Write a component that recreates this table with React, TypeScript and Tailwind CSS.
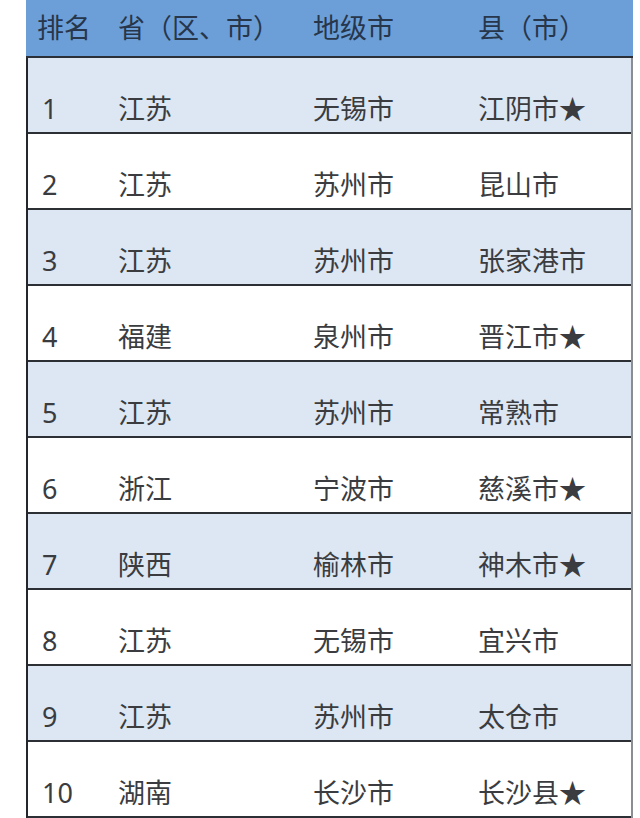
import React from "react";

type Row = {
  rank: string;
  province: string;
  city: string;
  county: string;
  star?: boolean;
};

const rows: Row[] = [
  { rank: "1", province: "江苏", city: "无锡市", county: "江阴市", star: true },
  { rank: "2", province: "江苏", city: "苏州市", county: "昆山市" },
  { rank: "3", province: "江苏", city: "苏州市", county: "张家港市" },
  { rank: "4", province: "福建", city: "泉州市", county: "晋江市", star: true },
  { rank: "5", province: "江苏", city: "苏州市", county: "常熟市" },
  { rank: "6", province: "浙江", city: "宁波市", county: "慈溪市", star: true },
  { rank: "7", province: "陕西", city: "榆林市", county: "神木市", star: true },
  { rank: "8", province: "江苏", city: "无锡市", county: "宜兴市" },
  { rank: "9", province: "江苏", city: "苏州市", county: "太仓市" },
  { rank: "10", province: "湖南", city: "长沙市", county: "长沙县", star: true },
];

const font = {
  fontFamily: '"Noto Sans", "Noto Sans CJK SC", sans-serif',
};

export default function App() {
  return (
    <div className="bg-white w-[640px] h-[818px] overflow-hidden" style={font}>
      <div className="ml-[26px] w-[607px]">
        {/* header */}
        <div className="h-[58px] bg-[#6c9fd7] border-b-2 border-[#2a2f38] grid grid-cols-[92px_195px_165px_1fr] items-center text-[27px] leading-[27px] text-[#27364a] pb-[2px]">
          <div className="pl-[11px]">排名</div>
          <div>省（区、市）</div>
          <div>地级市</div>
          <div>县（市）</div>
        </div>

        {/* body */}
        <div className="border-l-2 border-l-[#23262b] border-r-2 border-r-[#8a8d91]">
          {rows.map((r, i) => (
            <div
              key={r.rank}
              className={`h-[76px] border-b-2 border-[#2c2f33] grid grid-cols-[90px_195px_165px_1fr] pt-[37px] text-[27px] leading-[27px] text-[#3a3c3f] ${
                i % 2 === 0 ? "bg-[#dde7f3]" : "bg-white"
              }`}
            >
              <div className="pl-[14px]">{r.rank}</div>
              <div>{r.province}</div>
              <div>{r.city}</div>
              <div>
                {r.county}
                {r.star ? "★" : ""}
              </div>
            </div>
          ))}
        </div>
      </div>
    </div>
  );
}
